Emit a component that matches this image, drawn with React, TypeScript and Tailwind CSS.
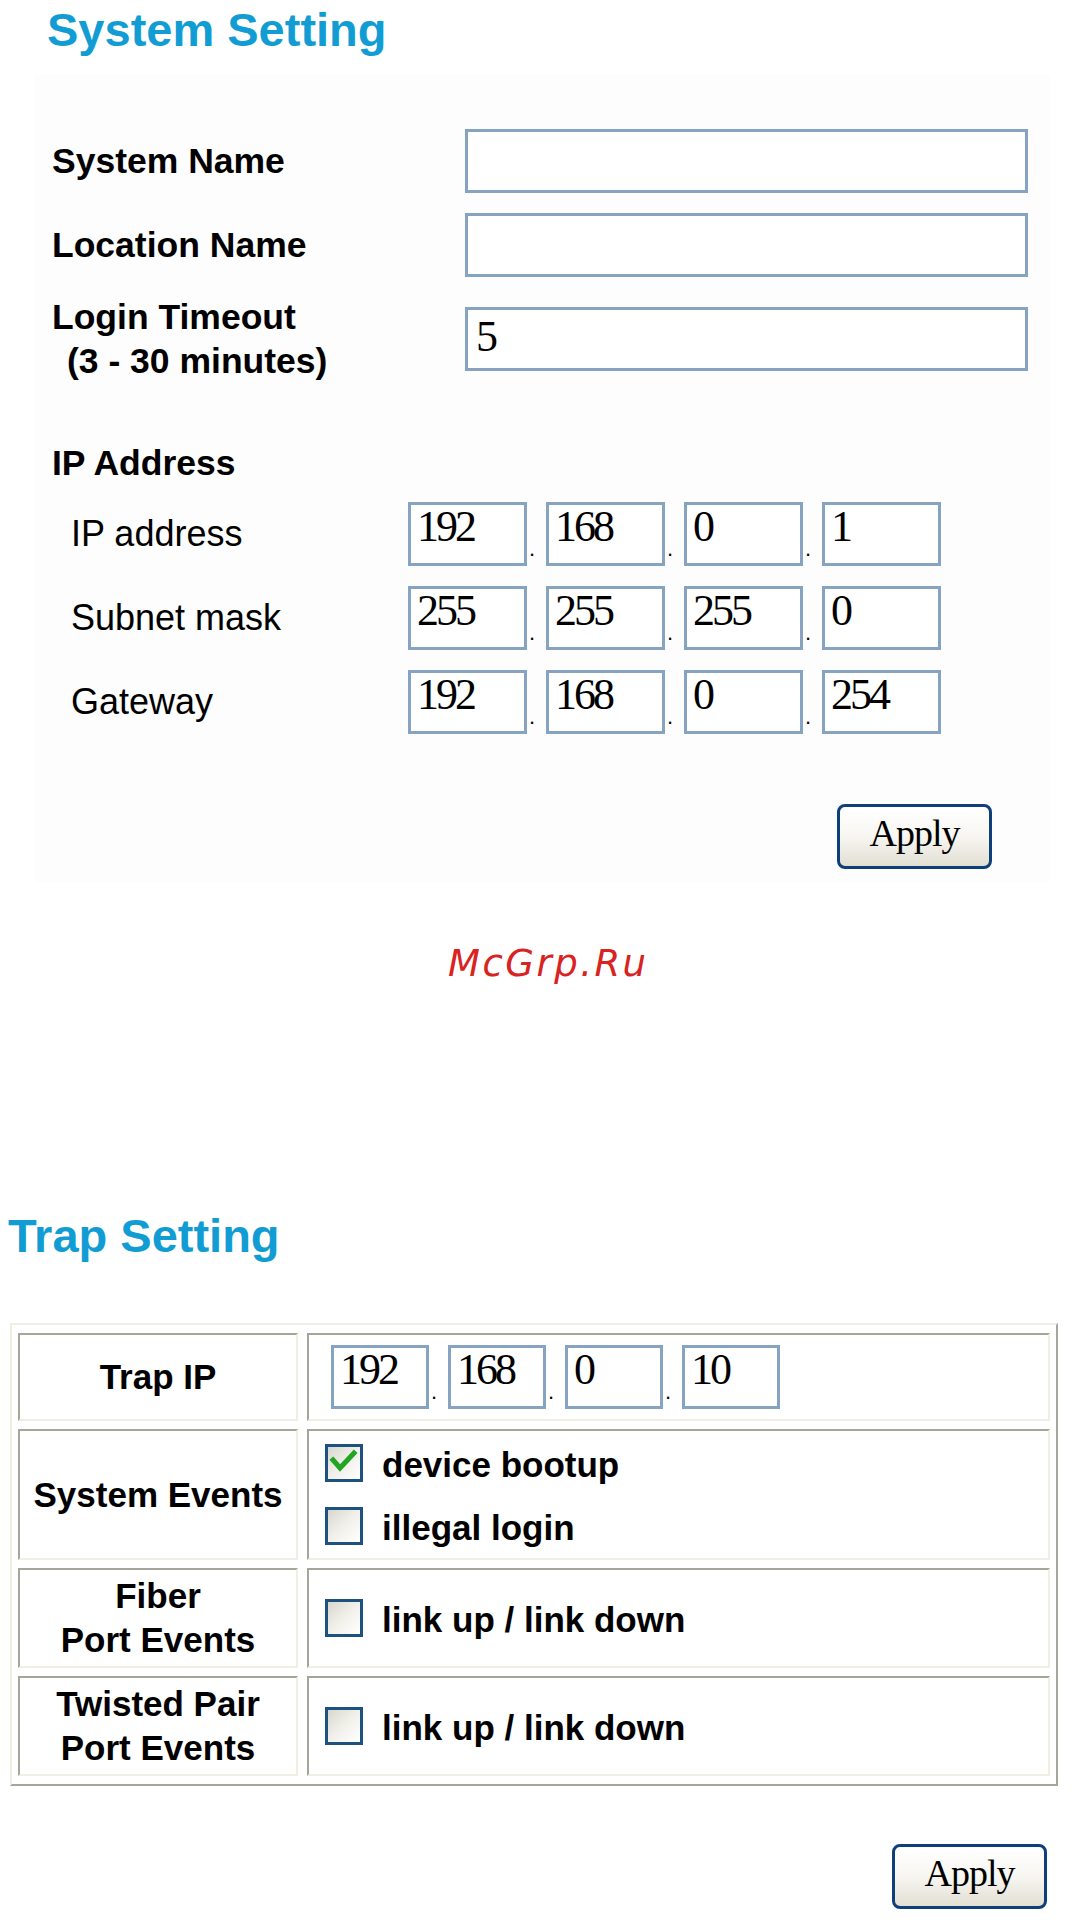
import React from "react";

const inputBox =
  "border-[3px] border-[#86a3c2] bg-white text-black font-['Liberation_Serif',serif] text-[44px] leading-[44px] tracking-[-3px] pl-[6px] overflow-hidden";

function IpBox({ v, w }: { v: string; w: string }) {
  return <div className={`${inputBox} ${w} h-[64px] flex items-start`}>{v}</div>;
}

function Dot() {
  return (
    <div className="w-[19px] h-[64px] flex items-end pb-[6px] pl-[2px] text-black text-[22px] leading-[22px] font-['Liberation_Sans',sans-serif]">
      .
    </div>
  );
}

function IpGroup({ parts, w }: { parts: string[]; w: string }) {
  return (
    <div className="flex">
      {parts.map((p, i) => (
        <React.Fragment key={i}>
          <IpBox v={p} w={w} />
          {i < parts.length - 1 && <Dot />}
        </React.Fragment>
      ))}
    </div>
  );
}

function ApplyButton() {
  return (
    <div className="w-[155px] h-[65px] rounded-[8px] border-[3px] border-[#0d3f78] bg-linear-to-b from-white via-[#f7f6f1] to-[#e2dfd3] flex items-center justify-center pb-[6px] font-['Liberation_Serif',serif] text-[38px] tracking-[-1px] text-black">
      Apply
    </div>
  );
}

function Checkbox({ checked }: { checked?: boolean }) {
  return (
    <div className="w-[38px] h-[38px] border-[3px] border-[#1c5180] bg-linear-to-br from-[#d8d7cf] via-[#f1f0ea] to-white flex items-center justify-center shrink-0">
      {checked && (
        <svg width="32" height="32" viewBox="0 0 32 32">
          <polyline
            points="5,13 12,21 26,6"
            fill="none"
            stroke="#22a522"
            strokeWidth="5"
            strokeLinecap="square"
          />
        </svg>
      )}
    </div>
  );
}

const cell =
  "border-2 border-t-[#a6a599] border-l-[#a6a599] border-b-[#f1efe3] border-r-[#f1efe3] bg-white";

export default function App() {
  return (
    <div className="w-[1084px] h-[1926px] bg-white overflow-hidden font-['Liberation_Sans',Arial,sans-serif] text-black">
      {/* System Setting */}
      <h1 className="pl-[47px] pt-[5px] text-[47px] leading-[50px] font-bold text-[#119dd4]">
        System Setting
      </h1>

      <div className="mt-[20px] ml-[35px] w-[1015px] bg-[#fdfdfd] pt-[54px] pl-[17px] pb-[13px]">
        <div className="flex items-center h-[64px]">
          <div className="w-[413px] text-[35.5px] leading-[40px] font-bold">System Name</div>
          <div className={`${inputBox} w-[563px] h-[64px]`}></div>
        </div>
        <div className="flex items-center h-[64px] mt-[20px]">
          <div className="w-[413px] text-[35.5px] leading-[40px] font-bold">Location Name</div>
          <div className={`${inputBox} w-[563px] h-[64px]`}></div>
        </div>
        <div className="flex items-center h-[64px] mt-[30px]">
          <div className="w-[413px] text-[35.5px] leading-[44px] font-bold">
            <div>Login Timeout</div>
            <div className="pl-[15px]">(3 - 30 minutes)</div>
          </div>
          <div className={`${inputBox} w-[563px] h-[64px] pt-[5px] pl-[8px]`}>5</div>
        </div>

        <div className="mt-[72px] text-[35.5px] leading-[40px] font-bold">IP Address</div>

        <div className="mt-[19px] flex flex-col gap-[20px]">
          {[
            { l: "IP address", p: ["192", "168", "0", "1"] },
            { l: "Subnet mask", p: ["255", "255", "255", "0"] },
            { l: "Gateway", p: ["192", "168", "0", "254"] },
          ].map((r) => (
            <div key={r.l} className="flex items-center">
              <div className="w-[356px] pl-[19px] text-[36px] leading-[40px]">{r.l}</div>
              <IpGroup parts={r.p} w="w-[119px]" />
            </div>
          ))}
        </div>

        <div className="mt-[70px] ml-[785px]">
          <ApplyButton />
        </div>
      </div>

      {/* Watermark */}
      <div className="mt-[62px] pl-[448px] text-[37px] leading-[40px] italic tracking-[2.5px] text-[#d92222] font-['DejaVu_Sans',sans-serif]">
        McGrp.Ru
      </div>

      {/* Trap Setting */}
      <h1 className="mt-[227px] pl-[8px] text-[47px] leading-[50px] font-bold text-[#119dd4]">
        Trap Setting
      </h1>

      <div className="mt-[62px] ml-[10px] w-[1048px] border-2 border-t-[#f1efe3] border-l-[#f1efe3] border-b-[#a6a599] border-r-[#a6a599] px-[6px] py-[8px]">
        <div className="grid grid-cols-[280px_743px] grid-rows-[88px_131px_100px_100px] gap-x-[9px] gap-y-[8px]">
          <div className={`${cell} flex items-center justify-center text-[35px] leading-[44px] font-bold`}>
            Trap IP
          </div>
          <div className={`${cell} flex items-center pl-[22px]`}>
            <IpGroup parts={["192", "168", "0", "10"]} w="w-[98px]" />
          </div>

          <div className={`${cell} flex items-center justify-center text-[35px] leading-[44px] font-bold`}>
            System Events
          </div>
          <div className={`${cell} flex flex-col justify-center gap-[21px] pl-[16px] text-[35px] leading-[38px] font-bold`}>
            <div className="flex items-center gap-[19px]">
              <Checkbox checked />
              <span className="pt-[4px]">device bootup</span>
            </div>
            <div className="flex items-center gap-[19px]">
              <Checkbox />
              <span className="pt-[4px]">illegal login</span>
            </div>
          </div>

          <div className={`${cell} flex flex-col items-center justify-center text-[35px] leading-[44px] font-bold text-center`}>
            <div>Fiber</div>
            <div>Port Events</div>
          </div>
          <div className={`${cell} flex items-center gap-[19px] pl-[16px] text-[35px] leading-[38px] font-bold`}>
            <Checkbox />
            <span className="pt-[4px]">link up / link down</span>
          </div>

          <div className={`${cell} flex flex-col items-center justify-center text-[35px] leading-[44px] font-bold text-center`}>
            <div>Twisted Pair</div>
            <div>Port Events</div>
          </div>
          <div className={`${cell} flex items-center gap-[19px] pl-[16px] text-[35px] leading-[38px] font-bold`}>
            <Checkbox />
            <span className="pt-[4px]">link up / link down</span>
          </div>
        </div>
      </div>

      <div className="mt-[58px] ml-[892px]">
        <ApplyButton />
      </div>
    </div>
  );
}
